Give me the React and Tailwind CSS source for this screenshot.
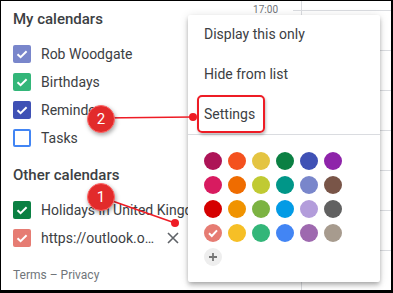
import React from "react";

const myCalendars = [
  { name: "Rob Woodgate", color: "bg-[#7986cb]", checked: true },
  { name: "Birthdays", color: "bg-[#33b679]", checked: true },
  { name: "Reminders", color: "bg-[#3f51b5]", checked: true },
  { name: "Tasks", color: "", checked: false },
];

const swatches = [
  ["#ad1457", "#f4511e", "#e4c441", "#0b8043", "#3f51b5", "#8e24aa"],
  ["#d81b60", "#ef6c00", "#c0ca33", "#009688", "#7986cb", "#795548"],
  ["#d50000", "#f09300", "#7cb342", "#039be5", "#b39ddb", "#616161"],
  ["#e67c73", "#f6bf26", "#33b679", "#4285f4", "#9e69af", "#a79b8e"],
];

function Check() {
  return (
    <svg width="18" height="18" viewBox="0 0 18 18">
      <path d="M4.5 9.2 L7.6 12.2 L13.6 6.2" fill="none" stroke="#fff" strokeWidth="2" />
    </svg>
  );
}

function Checkbox({ color, checked }) {
  if (!checked) {
    return <div className="w-[18px] h-[18px] rounded-[2px] border-2 border-[#4285f4] bg-white shrink-0" />;
  }
  return (
    <div className={`w-[18px] h-[18px] rounded-[2px] shrink-0 ${color}`}>
      <Check />
    </div>
  );
}

function Row({ children }) {
  return <div className="h-7 flex items-center gap-[10px] pl-[12px]">{children}</div>;
}

export default function App() {
  return (
    <div
      className="w-[393px] h-[293px] border-t border-l border-r-2 border-b-[3px] border-black bg-white overflow-hidden"
      style={{ fontFamily: "Roboto, 'Liberation Sans', sans-serif" }}
    >
      <div className="relative w-[390px] h-[289px] flex text-[#3c4043]">
        {/* sidebar */}
        <div className="w-[240px] shrink-0 pt-[8px]">
          <div className="pl-[12px] h-5 flex items-center text-[15px] font-medium">My calendars</div>
          <div className="mt-[11px]">
            {myCalendars.map(c => (
              <Row key={c.name}>
                <Checkbox color={c.color} checked={c.checked} />
                <span className="text-[14px] whitespace-nowrap">{c.name}</span>
              </Row>
            ))}
          </div>
          <div className="mt-[13px] pl-[12px] h-5 flex items-center text-[15px] font-medium">Other calendars</div>
          <div className="mt-[11px]">
            <Row>
              <Checkbox color="bg-[#0b8043]" checked />
              <span className="text-[14px] whitespace-nowrap">Holidays in United Kingdom</span>
            </Row>
            <Row>
              <Checkbox color="bg-[#e67c73]" checked />
              <span className="text-[14px] whitespace-nowrap w-[114px] truncate">https://outlook.office365.com/owa/calendar</span>
              <svg width="14" height="14" viewBox="0 0 14 14" className="ml-[1px]">
                <path d="M2 2 L12 12 M12 2 L2 12" stroke="#5f6368" strokeWidth="1.6" />
              </svg>
            </Row>
          </div>
          <div className="mt-[15px] pl-[12px] text-[12px] text-[#70757a] leading-4">Terms – Privacy</div>
        </div>

        {/* time gutter */}
        <div className="w-[60px] shrink-0 pt-[3px] flex">
          <span className="flex-1 text-right text-[10px] text-[#70757a] leading-3 pr-[15px]">17:00</span>
          <div className="w-[8px] h-px bg-[#dadce0] mt-[6px]" />
        </div>

        {/* day grid */}
        <div className="flex-1 border-l border-[#dadce0] pt-[9px]">
          {[0, 1, 2, 3, 4, 5, 6, 7].map(i => (
            <div key={i} className="h-10 border-t border-[#dadce0]" />
          ))}
        </div>

        {/* context menu */}
        <div className="absolute left-[187px] top-[14px] w-[192px] h-[267px] bg-white rounded-[2px] shadow-[0_4px_5px_0_rgba(0,0,0,0.14),0_1px_10px_0_rgba(0,0,0,0.12),0_2px_4px_-1px_rgba(0,0,0,0.2)] text-[14px]">
          <div className="h-[39px] flex items-center pl-4">Display this only</div>
          <div className="h-10 flex items-center pl-4">Hide from list</div>
          <div className="h-10 flex items-center pl-4">Settings</div>
          <div className="h-px bg-[#dadce0]" />
          <div className="pt-[17px] pl-4 flex flex-col gap-[6px]">
            {swatches.map((row, r) => (
              <div key={r} className="flex gap-[6px]">
                {row.map((c, i) => (
                  <div
                    key={c + i}
                    className="w-[18px] h-[18px] rounded-full flex items-center justify-center"
                    style={{ backgroundColor: c }}
                  >
                    {r === 3 && i === 0 && (
                      <svg width="12" height="12" viewBox="0 0 12 12">
                        <path d="M2 6.3 L4.8 9 L10 3.4" fill="none" stroke="#fff" strokeWidth="2" />
                      </svg>
                    )}
                  </div>
                ))}
              </div>
            ))}
            <div className="w-[18px] h-[18px] rounded-full bg-[#eeeeee] flex items-center justify-center">
              <svg width="8" height="8" viewBox="0 0 8 8">
                <path d="M4 0 V8 M0 4 H8" stroke="#757575" strokeWidth="1.8" />
              </svg>
            </div>
          </div>
        </div>

        {/* annotations */}
        <div className="absolute left-[196px] top-[94px] w-[68px] h-[38px] border-2 border-[#ee1c25] rounded-[5px] shadow-[1px_2px_3px_rgba(0,0,0,0.25)]" />
        <svg className="absolute inset-0 pointer-events-none" width="390" height="289">
          <line x1="100" y1="117" x2="192" y2="116" stroke="#ee1c25" strokeWidth="1.6" />
          <circle cx="192" cy="116" r="4" fill="#ee1c25" />
          <line x1="100" y1="196" x2="174" y2="222" stroke="#ee1c25" strokeWidth="1.6" />
          <circle cx="174" cy="222" r="4" fill="#ee1c25" />
        </svg>
        <div className="absolute left-[86px] top-[104px] w-[28px] h-[28px] rounded-full bg-[#e22b2b] border border-[#ff6a6a] shadow-[1px_2px_4px_rgba(0,0,0,0.35)] flex items-center justify-center text-white text-[15px]">2</div>
        <div className="absolute left-[86px] top-[182px] w-[28px] h-[28px] rounded-full bg-[#e22b2b] border border-[#ff6a6a] shadow-[1px_2px_4px_rgba(0,0,0,0.35)] flex items-center justify-center text-white text-[15px]">1</div>
      </div>
    </div>
  );
}
